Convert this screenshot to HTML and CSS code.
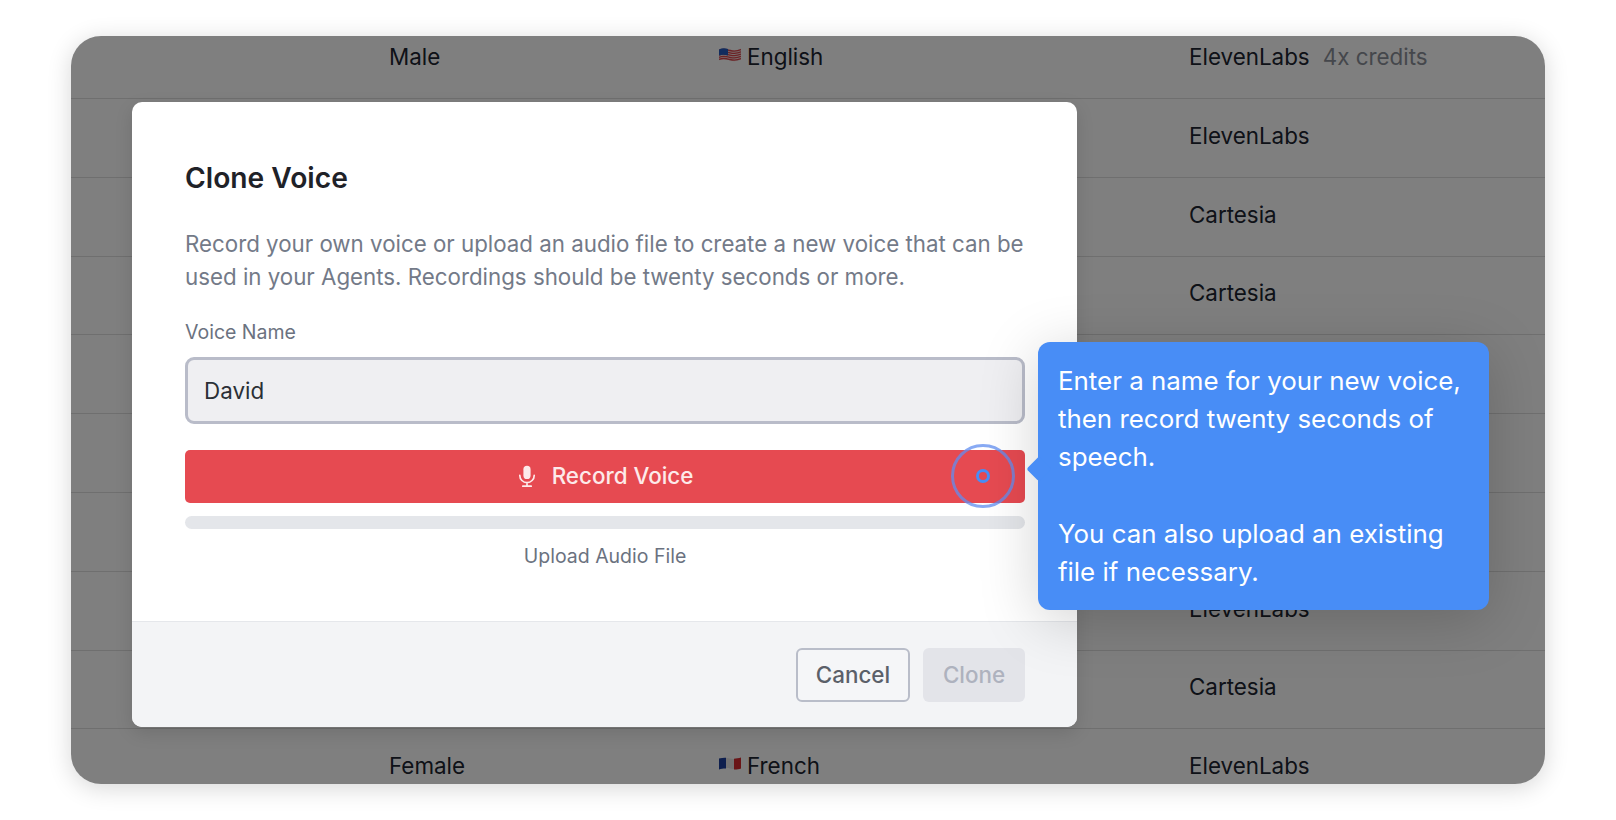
FILE: index.html
```html
<!DOCTYPE html>
<html lang="en">
<head>
<meta charset="utf-8">
<title>Clone Voice</title>
<link rel="stylesheet" href="styles.css">
</head>
<body>
<main class="window">
  <div class="rows">
    <div class="row row-first"><span>Male</span><span class="lang"><svg class="flag" viewBox="0 1 22 14"><path fill="#f0dcdc" d="M0 3C4 1 7 2 11 3s7 1 11-1v11c-4 2-7 2-11 1s-7-2-11 0z"/><path fill="none" stroke="#d8474d" stroke-width="1.300" d="M0 4C4 2 7 3 11 4s7 1 11-1M0 6.300C4 4.300 7 5.300 11 6.300s7 1 11-1M0 8.600C4 6.600 7 7.600 11 8.600s7 1 11-1M0 10.900C4 8.900 7 9.900 11 10.900s7 1 11-1M0 13C4 11 7 12 11 13s7 1 11-1"/><path fill="#2559bd" d="M0 3c3-1.500 6-1.300 9-.6V9C6 8.200 3 8 0 9z"/></svg>English</span><span class="provider">ElevenLabs<em class="credits">4x credits</em></span></div>
    <div class="row"><span></span><span></span><span class="provider">ElevenLabs</span></div>
    <div class="row"><span></span><span></span><span class="provider">Cartesia</span></div>
    <div class="row"><span></span><span></span><span class="provider">Cartesia</span></div>
    <div class="row"><span></span><span></span><span class="provider"></span></div>
    <div class="row"><span></span><span></span><span class="provider"></span></div>
    <div class="row"><span></span><span></span><span class="provider"></span></div>
    <div class="row"><span></span><span></span><span class="provider">ElevenLabs</span></div>
    <div class="row"><span></span><span></span><span class="provider">Cartesia</span></div>
    <div class="row row-last"><span>Female</span><span class="lang"><svg class="flag" viewBox="0 1 22 14"><path fill="#e9e6e6" d="M0 3c4-1 7-1 11 0s7 0 11-1v11c-4 1-7 1-11 0s-7 0-11 1z"/><path fill="#1d3f9c" d="M0 3c2.500-.6 5-.8 7-.7V13c-2-.1-4.500 0-7 1z"/><path fill="#d42a2f" d="M15 3.200c2.500 0 5-.5 7-1.200v11c-2 .7-4.500 1.200-7 1.100z"/></svg>French</span><span class="provider">ElevenLabs</span></div>
  </div>
  <div class="overlay"></div>
  <section class="modal">
    <div class="modal-body">
      <h2 class="title">Clone Voice</h2>
      <p class="desc">Record your own voice or upload an audio file to create a new voice that can be used in your Agents. Recordings should be twenty seconds or more.</p>
      <label class="label">Voice Name</label>
      <div class="input">David</div>
      <button class="record">
        <svg class="mic" viewBox="0 0 20 20"><rect x="7" y="1.500" width="6" height="11" rx="3" fill="currentColor"/><path d="M4 9.500a6 6 0 0 0 12 0M10 15.500v3M6.500 18.500h7" fill="none" stroke="currentColor" stroke-width="1.400" stroke-linecap="round"/></svg>
        Record Voice
      </button>
      <div class="progress"></div>
      <div class="upload">Upload Audio File</div>
    </div>
    <div class="modal-footer">
      <button class="btn btn-cancel">Cancel</button>
      <button class="btn btn-clone">Clone</button>
    </div>
  </section>
  <div class="ring"><div class="dot"></div></div>
  <aside class="tip">
    <p>Enter a name for your new voice, then record twenty seconds of speech.</p>
    <p>You can also upload an existing file if necessary.</p>
  </aside>
</main>
</body>
</html>
```
FILE: styles.css
```css
* { box-sizing: border-box; }
html, body { margin: 0; height: 100%; background: #fff; overflow: hidden; }
body {
  padding: 36px 71px;
  font-family: Inter, "Liberation Sans", sans-serif;
  color: #1f2937;
}
.window {
  position: relative;
  width: 1474px;
  height: 748px;
  border-radius: 30px;
  overflow: hidden;
  background: #fff;
  box-shadow: 0 4px 24px rgba(0,0,0,.16);
}
.rows { display: flex; flex-direction: column; font-size: 22.400px; color: #1c2430; }
.row {
  display: grid;
  grid-template-columns: 330px 469px 1fr;
  padding: 0 0 5px 318px;
  height: 78.800px;
  align-items: center;
  border-bottom: 1px solid #dedede;
  flex: none;
}
.row-first { height: 63px; padding-bottom: 22px; }
.row-last { border-bottom: 0; height: 56px; padding: 16px 0 0 318px; }
.lang { display: flex; align-items: center; gap: 6px; }
.flag { width: 22px; height: 15px; margin-top: -3px; flex: none; }
.provider { padding-left: 1px; }
.credits { font-style: normal; color: #8a8f98; margin-left: 13px; }
.overlay { position: absolute; inset: 0; background: rgba(0,0,0,.5); }
.modal {
  position: absolute;
  left: 61px;
  top: 66px;
  width: 945px;
  height: 625px;
  background: #fff;
  border-radius: 10px;
  overflow: hidden;
  display: flex;
  flex-direction: column;
  box-shadow: 0 6px 18px rgba(0,0,0,.12);
}
.modal-body { flex: 1; padding: 57px 52px 0 53px; display: flex; flex-direction: column; }
.title { margin: 0; font-size: 28.200px; line-height: 38px; font-weight: 600; color: #1f2228; }
.desc { margin: 30px -8px 0 0; font-size: 22.300px; line-height: 33px; color: #737a88; }
.label { margin-top: 26px; font-size: 19.500px; line-height: 26px; color: #6b7280; font-weight: 400; }
.input {
  margin-top: 12px;
  height: 67px;
  border: 3px solid #b9bcc9;
  border-radius: 9px;
  background: #efeff2;
  display: flex;
  align-items: center;
  padding-left: 16px;
  font-size: 22.400px;
  color: #2b2f36;
}
.record {
  margin-top: 26px;
  height: 53px;
  border: 0;
  padding: 0 2px 2px 0;
  border-radius: 5px;
  background: #e64a51;
  color: #fdeaea;
  font: 500 22.400px Inter, "Liberation Sans", sans-serif;
  display: flex;
  align-items: center;
  justify-content: center;
  gap: 13px;
}
.mic { width: 24px; height: 24px; }
.progress { margin-top: 13px; height: 13px; border-radius: 7px; background: #e4e6ea; }
.upload { margin-top: 14px; text-align: center; font-size: 19.500px; line-height: 26px; color: #6b7280; }
.modal-footer {
  height: 106px;
  flex: none;
  background: #f3f4f6;
  border-top: 1px solid #e5e7eb;
  display: flex;
  justify-content: flex-end;
  align-items: center;
  gap: 13px;
  padding: 0 52px;
}
.btn { height: 54px; border-radius: 6px; font: 500 22.400px Inter, "Liberation Sans", sans-serif; }
.btn-cancel { width: 114px; background: #f5f6f8; border: 2px solid #b9bdc9; color: #5b6069; }
.btn-clone { width: 102px; background: #e3e4e9; border: 0; color: #aeb2be; }
.ring {
  position: absolute;
  left: 880px;
  top: 408px;
  width: 64px;
  height: 64px;
  border: 3px solid rgba(96,142,240,.75);
  border-radius: 50%;
  display: flex;
  align-items: center;
  justify-content: center;
}
.dot { width: 14px; height: 14px; border: 3px solid #488df6; border-radius: 50%; }
.tip {
  position: absolute;
  left: 967px;
  top: 306px;
  width: 451px;
  height: 268px;
  padding: 20px 20px;
  background: #488df6;
  color: #fff;
  border-radius: 12px;
  font-size: 25.900px;
  line-height: 38px;
  box-shadow: 0 10px 60px rgba(0,0,0,.18);
}
.tip::before {
  content: "";
  position: absolute;
  left: -8px;
  top: 118px;
  width: 18px;
  height: 18px;
  background: #488df6;
  border-radius: 3px;
  transform: rotate(45deg);
}
.tip p { margin: 0 0 39px; position: relative; }
.tip p:last-child { margin: 0; }
```
